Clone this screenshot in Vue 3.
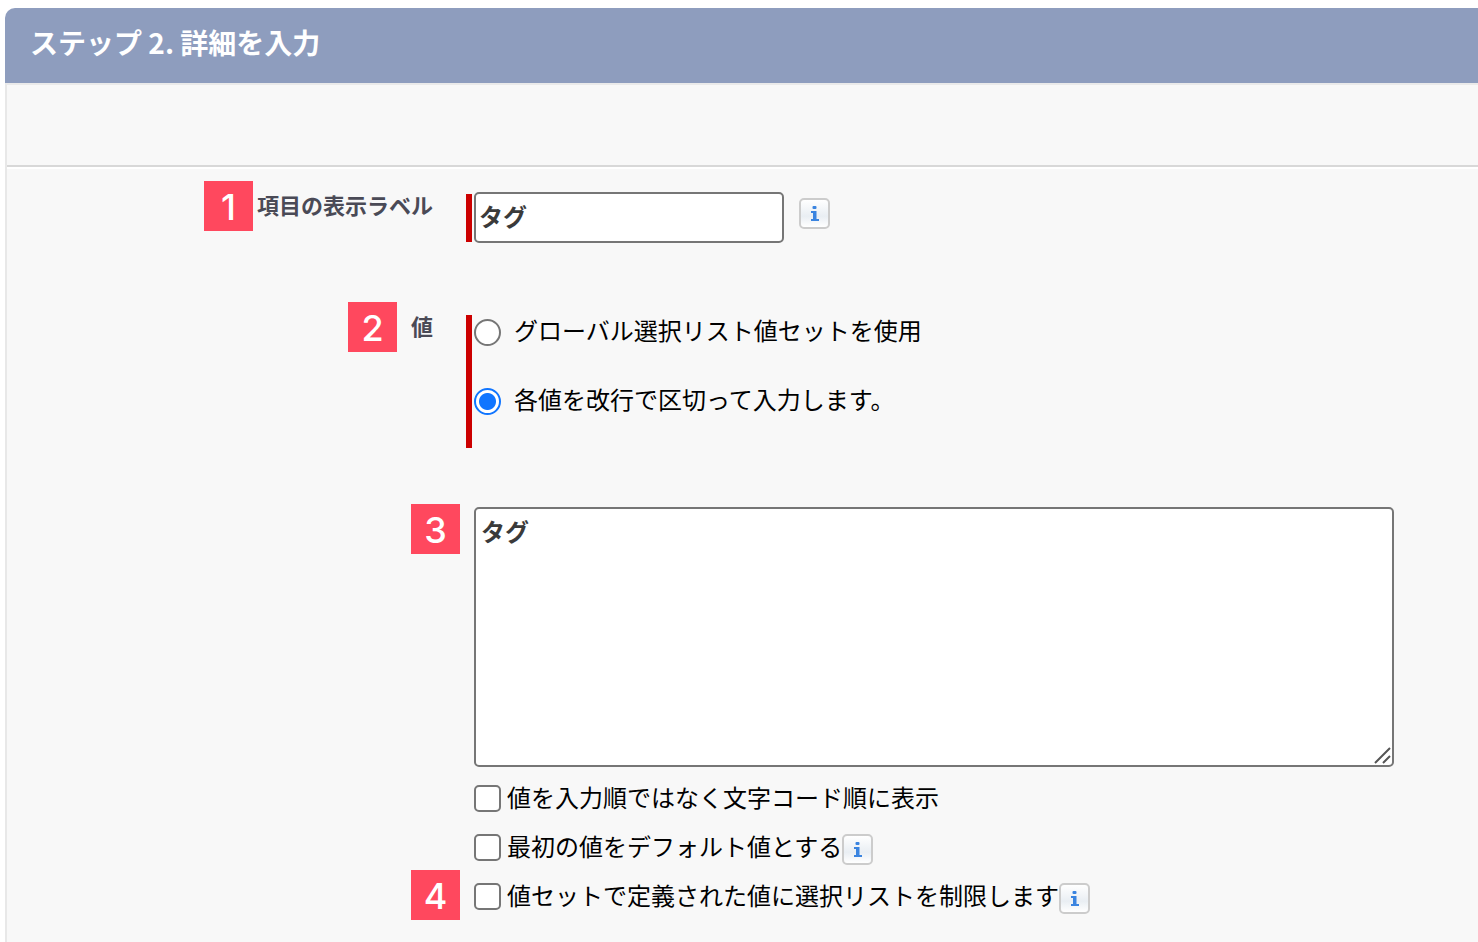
<script setup>
import { h, ref } from 'vue'

const label = ref('タグ')
const source = ref('list')
const values = ref('タグ')

const sources = [
  { id: 'global', text: 'グローバル選択リスト値セットを使用' },
  { id: 'list', text: '各値を改行で区切って入力します。' },
]

const options = ref([
  { id: 'sort', text: '値を入力順ではなく文字コード順に表示', checked: false },
  { id: 'first', text: '最初の値をデフォルト値とする', checked: false, info: true },
  { id: 'restrict', text: '値セットで定義された値に選択リストを制限します', checked: false, info: true, step: 4 },
])

// small "i" mark used inside the help buttons
const InfoMark = () =>
  h('svg', { width: 27, height: 27, viewBox: '0 0 27 27', fill: '#3a84e0', 'aria-hidden': 'true' }, [
    h('rect', { x: 11.5, y: 6, width: 4, height: 3, rx: 1 }),
    h('path', { d: 'M10 11h5.5v8H18v2h-8v-2h2v-6h-2z' }),
  ])
</script>

<template>
  <div class="page">
    <h1 class="title">ステップ 2. 詳細を入力</h1>

    <form class="panel" @submit.prevent>
      <div class="toolbar"></div>

      <div class="row name-row">
        <div class="side">
          <span class="step">1</span>
          <label class="label" for="label">項目の表示ラベル</label>
        </div>
        <div class="field name-field">
          <span class="required"></span>
          <input id="label" v-model="label" class="text" type="text">
          <button class="info" type="button" aria-label="ヘルプ"><InfoMark /></button>
        </div>
      </div>

      <div class="row value-row">
        <div class="side wide">
          <span class="step">2</span>
          <span id="source" class="label">値</span>
        </div>
        <div class="field value-field">
          <span class="required"></span>
          <div class="radios" role="radiogroup" aria-labelledby="source">
            <label v-for="item in sources" :key="item.id" class="radio">
              <input v-model="source" type="radio" name="source" :value="item.id">
              <span class="caption">{{ item.text }}</span>
            </label>
          </div>
        </div>
      </div>

      <div class="row list-row">
        <div class="side flush"><span class="step">3</span></div>
        <div class="field plain">
          <div class="area">
            <textarea v-model="values" aria-labelledby="source"></textarea>
            <svg class="grip" width="18" height="18" viewBox="0 0 18 18" aria-hidden="true">
              <path d="M1 16L16 1M9 16l7-7" fill="none" stroke="#555" stroke-width="2" />
            </svg>
          </div>
        </div>
      </div>

      <div v-for="item in options" :key="item.id" class="row option">
        <div class="side flush">
          <span v-if="item.step" class="step">{{ item.step }}</span>
        </div>
        <div class="field plain">
          <label class="check">
            <input v-model="item.checked" type="checkbox">
            <span class="caption">{{ item.text }}</span>
          </label>
          <button v-if="item.info" class="info" type="button" aria-label="ヘルプ"><InfoMark /></button>
        </div>
      </div>
    </form>
  </div>
</template>

<style>
body {
  margin: 0;
  background: #fff;
}
</style>

<style scoped>
* {
  box-sizing: border-box;
}

.page {
  display: flex;
  flex-direction: column;
  min-height: 100vh;
  padding: 8px 0 0 5px;
  overflow: hidden;
  font-family: "Noto Sans CJK JP", sans-serif;
  font-size: 24px;
  line-height: 30px;
  color: #000;
}

.title {
  margin: 0;
  padding: 16px 25px 23px;
  border-radius: 10px 0 0 0;
  background: #8e9dbe;
  color: #fff;
  font-size: 28px;
  line-height: 36px;
  font-weight: bold;
}

.panel {
  flex: 1;
  border-top: 2px solid #eaeaea;
  border-left: 2px solid #e8e8e8;
  background: #f8f8f8;
}

.toolbar {
  height: 82px;
  border-bottom: 2px solid #d8d8d8;
  box-shadow: 0 2px 0 #fff;
}

.row {
  display: grid;
  grid-template-columns: 453px 1fr;
  column-gap: 6px;
}

.name-row {
  padding-top: 14px;
}

.value-row {
  padding-top: 59px;
}

.list-row {
  padding-top: 56px;
  padding-bottom: 7px;
}

.side {
  display: flex;
  justify-content: flex-end;
  align-items: flex-start;
  gap: 4px;
  padding-right: 27px;
}

.side.wide {
  gap: 14px;
}

.side.flush {
  padding-right: 0;
}

.step {
  width: 49px;
  height: 50px;
  background: #ff485e;
  color: #fff;
  font-family: Inter, sans-serif;
  font-size: 36px;
  font-weight: 500;
  line-height: 52px;
  text-align: center;
}

.label {
  color: #4a4a56;
  font-size: 22px;
  line-height: 46px;
  font-weight: bold;
}

.field {
  display: flex;
  align-items: flex-start;
}

.name-field {
  padding-top: 11px;
}

.value-field {
  padding-top: 13px;
}

.plain {
  padding-left: 8px;
}

.required {
  align-self: stretch;
  width: 6px;
  margin-right: 2px;
  background: #c00;
}

.name-field .required {
  margin-top: 2px;
  margin-bottom: 1px;
}

.text,
textarea {
  border: 2px solid #767676;
  border-radius: 5px;
  background: #fff;
  color: #3a3a3a;
  font: bold 24px/34px "Noto Sans CJK JP", sans-serif;
}

.text {
  width: 310px;
  height: 51px;
  padding: 0 3px 4px;
}

.name-field .info {
  margin: 6px 0 0 15px;
}

.info {
  flex: none;
  width: 31px;
  height: 31px;
  padding: 0;
  border: 2px solid #ccc;
  border-radius: 5px;
  background: linear-gradient(#fff, #e9eef3 60%, #fff);
}

.info svg {
  display: block;
}

.radios {
  display: flex;
  flex-direction: column;
  gap: 35px;
  padding-bottom: 30px;
}

.radio,
.check {
  display: flex;
  align-items: center;
}

.radio {
  gap: 13px;
}

.check {
  gap: 6px;
}

.caption {
  padding-bottom: 4px;
}

.radio input,
.check input {
  appearance: none;
  width: 27px;
  height: 27px;
  margin: 0;
  border: 2px solid #767676;
  background: #fff;
}

.radio input {
  border-radius: 50%;
}

.radio input:checked {
  border-color: #1075ff;
  background: radial-gradient(circle, #1075ff 8px, #fff 9px);
}

.check input {
  border-radius: 5px;
}

.check input:checked {
  border-color: #1075ff;
  background: #1075ff;
}

.area {
  position: relative;
  width: 920px;
  max-width: 100%;
  padding-top: 3px;
}

textarea {
  display: block;
  width: 100%;
  height: 260px;
  padding: 5px;
  resize: none;
}

.grip {
  position: absolute;
  right: 2px;
  bottom: 2px;
  pointer-events: none;
}

.option {
  grid-template-rows: 49px;
}

.option .field,
.option .side {
  align-items: center;
}

.option .side {
  padding-bottom: 4px;
}

.option .info {
  margin-top: 4px;
}
</style>
